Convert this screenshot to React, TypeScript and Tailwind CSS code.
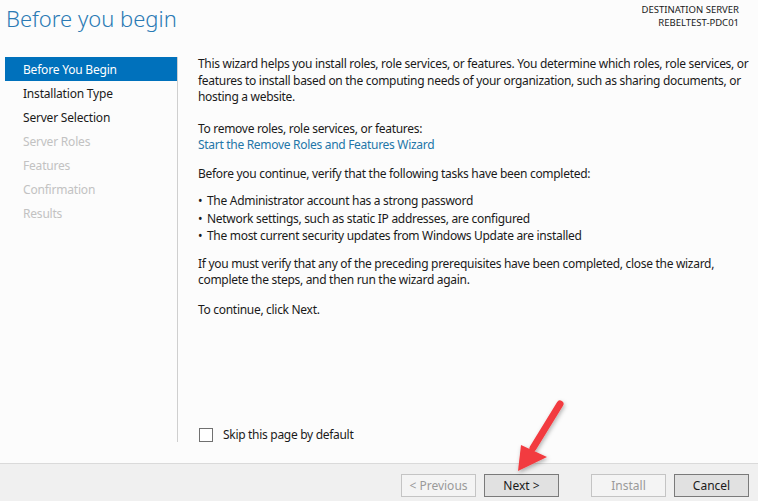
import React from 'react';

const steps = [
  { label: 'Before You Begin', state: 'active' },
  { label: 'Installation Type', state: 'done' },
  { label: 'Server Selection', state: 'done' },
  { label: 'Server Roles', state: 'off' },
  { label: 'Features', state: 'off' },
  { label: 'Confirmation', state: 'off' },
  { label: 'Results', state: 'off' },
];

const bullets = [
  'The Administrator account has a strong password',
  'Network settings, such as static IP addresses, are configured',
  'The most current security updates from Windows Update are installed',
];

function WizardButton({ label, disabled }: { label: string; disabled?: boolean }) {
  return (
    <button
      type="button"
      className={
        disabled
          ? 'w-[75px] h-[23px] border border-[#c4c4c4] bg-[#f4f4f4] text-[#9a9a9a] text-[12px] leading-none'
          : 'w-[75px] h-[23px] border border-[#7a7a7a] bg-[#e1e1e1] text-[#1a1a1a] text-[12px] leading-none'
      }
    >
      {label}
    </button>
  );
}

// red callout arrow pointing at the Next button
function CalloutArrow() {
  return (
    <svg
      className="absolute left-[505px] top-[395px] pointer-events-none"
      width="70"
      height="85"
      viewBox="0 0 70 85"
    >
      <defs>
        <filter id="arrowShadow" x="-30%" y="-30%" width="160%" height="160%">
          <feDropShadow dx="1" dy="2" stdDeviation="2" floodColor="#000" floodOpacity="0.3" />
        </filter>
      </defs>
      <g filter="url(#arrowShadow)">
        <line x1="55" y1="9" x2="28" y2="53" stroke="#f23b3f" strokeWidth="7" strokeLinecap="round" />
        <polygon points="13,76 16,50 42,62" fill="#f23b3f" />
      </g>
    </svg>
  );
}

export default function App() {
  return (
    <div
      className="relative w-[758px] h-[501px] bg-[#fcfcfc] text-[#1a1a1a] overflow-hidden flex flex-col"
      style={{ fontFamily: '"Noto Sans", "Open Sans", sans-serif' }}
    >
      {/* Header */}
      <div className="h-[57px] flex justify-between shrink-0">
        <h1 className="pl-[6px] pt-[3px] text-[22px] leading-[30px] font-light text-[#2a7ab4]">
          Before you begin
        </h1>
        <div className="pr-[19px] pt-[3px] text-right text-[9.5px] leading-[13px] text-[#1a1a1a]">
          <div>DESTINATION SERVER</div>
          <div>REBELTEST-PDC01</div>
        </div>
      </div>

      {/* Body */}
      <div className="flex flex-1 min-h-0">
        <div className="w-[178px] shrink-0 pl-[5px] pb-[21px]">
          <div className="h-full border-r border-[#cfcfcf]">
            {steps.map((s) => (
              <div
                key={s.label}
                className={
                  s.state === 'active'
                    ? 'h-[24px] pl-[18px] pt-[2px] flex items-center text-[12px] tracking-[-0.2px] bg-[#0071bc] text-white'
                    : s.state === 'done'
                      ? 'h-[24px] pl-[18px] pt-[2px] flex items-center text-[12px] tracking-[-0.2px] text-[#1a1a1a]'
                      : 'h-[24px] pl-[18px] pt-[2px] flex items-center text-[12px] tracking-[-0.2px] text-[#c2c2c2]'
                }
              >
                {s.label}
              </div>
            ))}
          </div>
        </div>

        <div className="flex-1 pl-[20px] pr-[4px] flex flex-col text-[12px] leading-[16.5px] tracking-[-0.3px] whitespace-nowrap">
          <p className="mt-[-1px]">
            This wizard helps you install roles, role services, or features. You determine which roles, role services, or
            <br />
            features to install based on the computing needs of your organization, such as sharing documents, or
            <br />
            hosting a website.
          </p>
          <p className="mt-[15px]">To remove roles, role services, or features:</p>
          <p className="text-[#2376a8]">Start the Remove Roles and Features Wizard</p>
          <p className="mt-[12px]">Before you continue, verify that the following tasks have been completed:</p>
          <ul className="mt-[10px] leading-[17.5px]">
            {bullets.map((b) => (
              <li key={b} className="flex">
                <span className="w-[9px] shrink-0">•</span>
                <span>{b}</span>
              </li>
            ))}
          </ul>
          <p className="mt-[11px]">
            If you must verify that any of the preceding prerequisites have been completed, close the wizard,
            <br />
            complete the steps, and then run the wizard again.
          </p>
          <p className="mt-[13px]">To continue, click Next.</p>

          <label className="mt-auto mb-[20px] flex items-center gap-[10px]">
            <span className="ml-[1px] w-[14px] h-[14px] border border-[#707070] bg-white" />
            <span>Skip this page by default</span>
          </label>
        </div>
      </div>

      {/* Footer buttons */}
      <div className="h-[38px] shrink-0 bg-[#f0f0f0] border-t border-[#dadada] flex items-start pt-[10px] pl-[401px]">
        <div className="flex gap-[8px]">
          <WizardButton label="< Previous" disabled />
          <WizardButton label="Next >" />
        </div>
        <div className="flex gap-[8px] ml-[32px]">
          <WizardButton label="Install" disabled />
          <WizardButton label="Cancel" />
        </div>
      </div>

      <CalloutArrow />
    </div>
  );
}
